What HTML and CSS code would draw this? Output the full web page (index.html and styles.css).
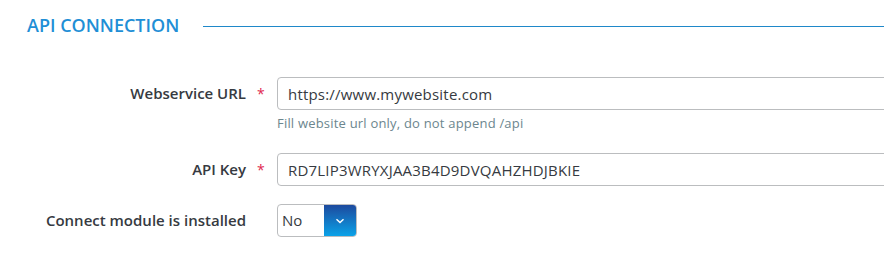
FILE: index.html
```html
<!DOCTYPE html>
<html>
<head>
    <link rel="stylesheet" href="styles.css">
</head>

<body>
    <div class="panel">
        <div class="panel-heading">
            <h3 class="panel-title">API CONNECTION</h3>
            <div class="panel-rule"></div>
        </div>

        <div class="form">
            <div class="form-row">
                <label class="form-label">Webservice URL</label>
                <span class="required">*</span>
                <div class="form-field">
                    <input type="text" class="form-input" value="https://www.mywebsite.com">
                    <p class="help">Fill website url only, do not append /api</p>
                </div>
            </div>

            <div class="form-row">
                <label class="form-label">API Key</label>
                <span class="required">*</span>
                <div class="form-field">
                    <input type="text" class="form-input" value="RD7LIP3WRYXJAA3B4D9DVQAHZHDJBKIE">
                </div>
            </div>

            <div class="form-row">
                <label class="form-label">Connect module is installed</label>
                <span class="required"></span>
                <div class="form-field">
                    <div class="select">
                        <span class="select-value">No</span>
                        <span class="select-btn">
                            <svg width="10" height="6" viewBox="0 0 10 6"><path d="M1.5 1.2 5 4.6 8.5 1.2" fill="none" stroke="#fff" stroke-width="1.4"/></svg>
                        </span>
                    </div>
                </div>
            </div>
        </div>
    </div>
</body>

</html>
```

FILE: styles.css
```css
html, body{
    margin: 0;
    padding: 0;
    background: #fff;
    overflow: hidden;
}
body{
    font-family: "Open Sans", "DejaVu Sans", sans-serif;
    color: #363a41;
    width: 884px;
}
.panel{
    padding-top: 15px;
}
.panel-heading{
    display: flex;
    align-items: center;
    padding-left: 27px;
}
.panel-title{
    margin: 0;
    font-size: 18px;
    line-height: 20px;
    font-weight: 600;
    color: #1f8fd6;
}
.panel-rule{
    flex: 1;
    height: 1px;
    margin-left: 24px;
    margin-top: 2px;
    background: #1f88c9;
}
.form{
    margin-top: 42px;
}
.form-row{
    display: grid;
    grid-template-columns: 246px 31px 640px;
    align-items: start;
    margin-bottom: 18px;
}
.form-label{
    text-align: right;
    font-size: 15px;
    font-weight: 600;
    line-height: 33px;
}
.required{
    color: #e0294f;
    font-size: 14px;
    line-height: 33px;
    padding-left: 11px;
}
.form-input{
    box-sizing: border-box;
    width: 100%;
    height: 33px;
    padding: 0 10px;
    border: 1px solid #bbbdbf;
    border-radius: 4px;
    font-family: inherit;
    font-size: 15px;
    letter-spacing: 0.2px;
    color: #363a41;
    outline: none;
}
.help{
    margin: 5px 0 4px;
    font-size: 13px;
    line-height: 16px;
    letter-spacing: 0.2px;
    color: #6c868e;
}
.select{
    display: flex;
    width: 80px;
    height: 33px;
    box-sizing: border-box;
    border: 1px solid #bbbdbf;
    border-radius: 4px;
    overflow: hidden;
}
.select-value{
    flex: 1;
    font-size: 15px;
    line-height: 31px;
    padding-left: 4px;
}
.select-btn{
    width: 32px;
    display: flex;
    align-items: center;
    justify-content: center;
    background: linear-gradient(#1d4a9e, #0aa2e8);
}
```
